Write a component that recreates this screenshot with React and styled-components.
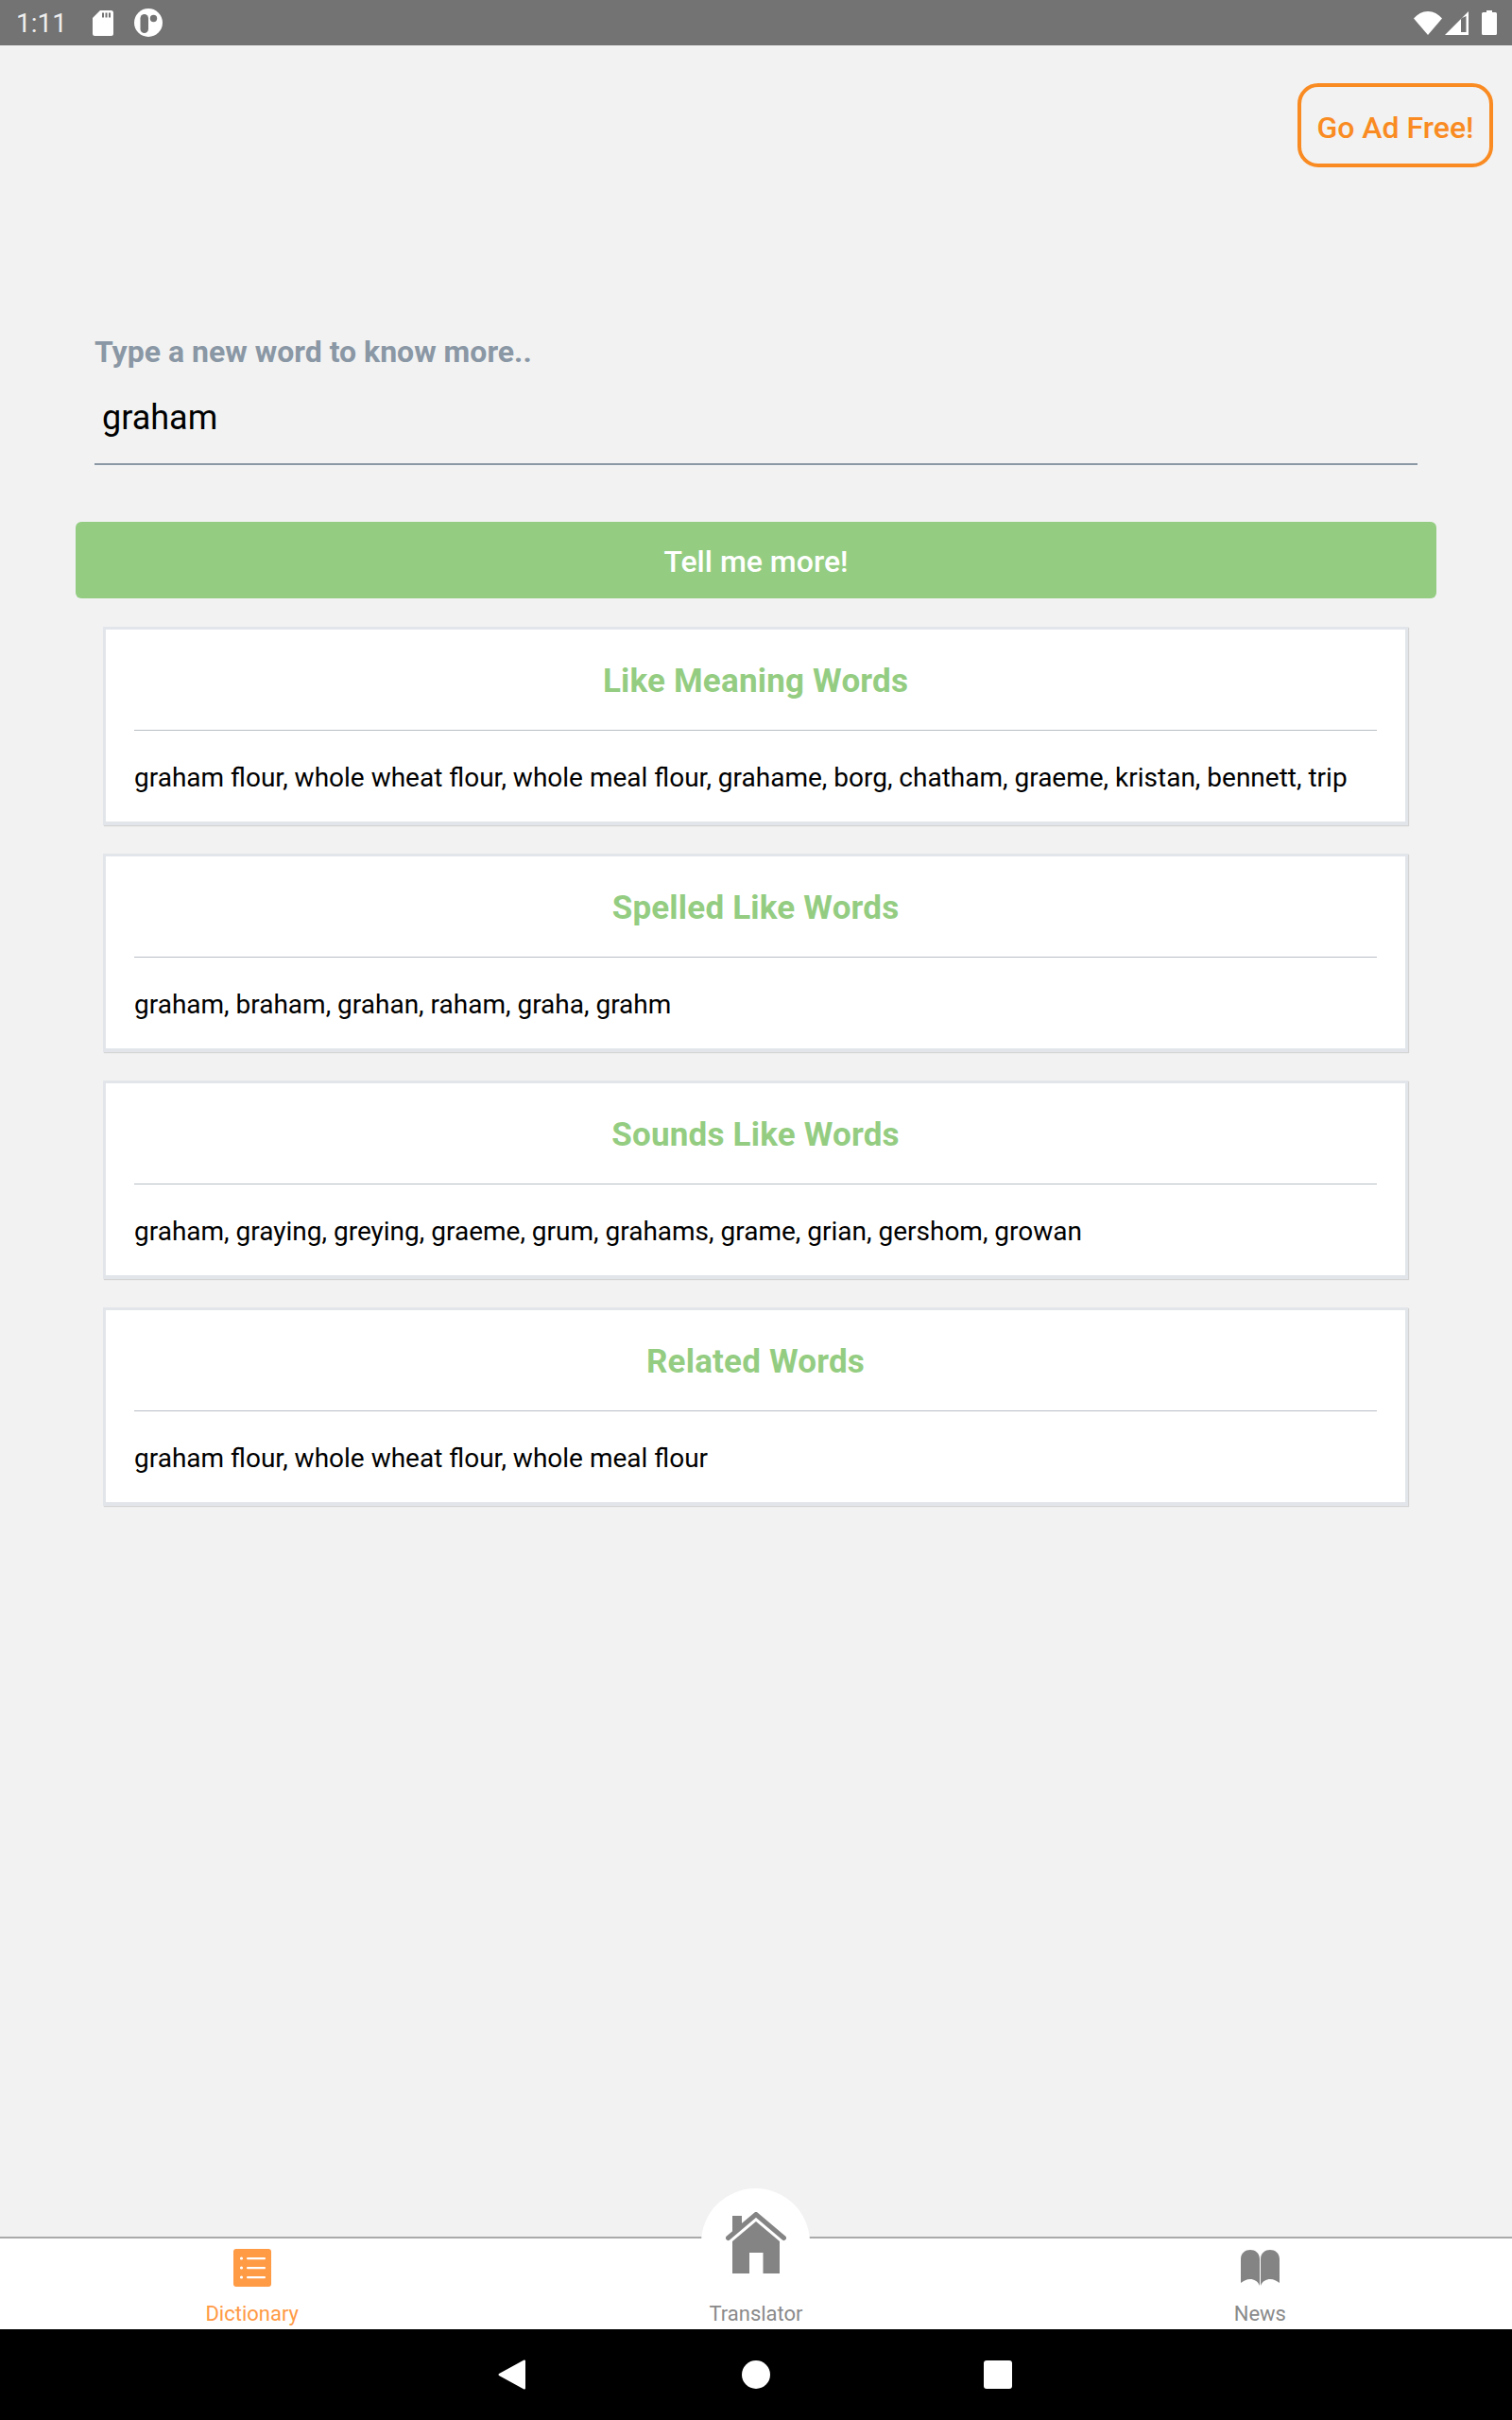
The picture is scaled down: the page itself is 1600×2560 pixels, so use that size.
import styled, { createGlobalStyle } from "styled-components";

const GlobalStyle = createGlobalStyle`
	html, body {
		margin: 0;
		padding: 0;
		background: #f2f2f2;
		font-family: Roboto, "Liberation Sans", sans-serif;
	}
	* {
		box-sizing: border-box;
	}
`;

const cards = [
	{ title: "Like Meaning Words", words: "graham flour, whole wheat flour, whole meal flour, grahame, borg, chatham, graeme, kristan, bennett, trip" },
	{ title: "Spelled Like Words", words: "graham, braham, grahan, raham, graha, grahm" },
	{ title: "Sounds Like Words", words: "graham, graying, greying, graeme, grum, grahams, grame, grian, gershom, growan" },
	{ title: "Related Words", words: "graham flour, whole wheat flour, whole meal flour" },
];

export default function App() {
	return (
		<>
			<GlobalStyle />
			<Page>
				<StatusBar>
					<Clock>1:11</Clock>
					<StatusIcon width="22" height="27" viewBox="0 0 22 27">
						<path fillRule="evenodd" fill="#fff" d="M8 0H19.5A2.5 2.5 0 0 1 22 2.5V24.5A2.5 2.5 0 0 1 19.5 27H2.5A2.5 2.5 0 0 1 0 24.5V8ZM10 2.5V7.5H12V2.5ZM13.5 2.5V7.5H15.5V2.5ZM17 2.5V7.5H19V2.5Z" />
					</StatusIcon>
					<StatusIcon $left={22} width="30" height="30" viewBox="0 0 30 30">
						<circle cx="15" cy="15" r="15" fill="#fff" />
						<rect x="6.5" y="6" width="8.5" height="20" rx="4.25" fill="#737373" />
						<circle cx="20.5" cy="10.5" r="3.7" fill="#737373" />
					</StatusIcon>
					<StatusRight>
						<svg width="30" height="25" viewBox="0 0 30 25">
							<path fill="#fff" d="M0 7.5C4 3 9 0 15 0S26 3 30 7.5L15 25Z" />
						</svg>
						<svg width="25" height="25" viewBox="0 0 25 25">
							<path fillRule="evenodd" fill="#fff" d="M0 25L25 0V25ZM17 7.5V22H22.5V5Z" />
						</svg>
						<BatterySpacer />
						<svg width="16" height="26" viewBox="0 0 16 26">
							<path fill="#fff" d="M5 0H11V2H14.5A1.5 1.5 0 0 1 16 3.5V24.5A1.5 1.5 0 0 1 14.5 26H1.5A1.5 1.5 0 0 1 0 24.5V3.5A1.5 1.5 0 0 1 1.5 2H5Z" />
						</svg>
					</StatusRight>
				</StatusBar>

				<Content>
					<TopRow>
						<AdButton>Go Ad Free!</AdButton>
					</TopRow>
					<SearchField>
						<FieldLabel>Type a new word to know more..</FieldLabel>
						<FieldValue>graham</FieldValue>
					</SearchField>
					<SubmitButton>Tell me more!</SubmitButton>
					<CardList>
						{cards.map((card) => (
							<Card key={card.title}>
								<CardTitle>{card.title}</CardTitle>
								<CardWords>{card.words}</CardWords>
							</Card>
						))}
					</CardList>
				</Content>

				<TabBar>
					<Tab $active>
						<TabIcon>
							<svg width="40" height="40" viewBox="0 0 40 40">
								<rect width="40" height="40" rx="3" fill="#ff9a45" />
								<g fill="#fff">
									<circle cx="8.5" cy="10" r="1.6" />
									<circle cx="8.5" cy="20" r="1.6" />
									<circle cx="8.5" cy="30" r="1.6" />
									<rect x="14" y="9" width="20" height="2.2" rx="1" />
									<rect x="14" y="19" width="20" height="2.2" rx="1" />
									<rect x="14" y="29" width="20" height="2.2" rx="1" />
								</g>
							</svg>
						</TabIcon>
						Dictionary
					</Tab>
					<Tab>
						<Bump />
						<HomeIcon width="64" height="66" viewBox="0 0 64 66">
							<path fill="#848484" d="M7 4H17V15L7 26Z" />
							<path fill="none" stroke="#848484" strokeWidth="5" strokeLinecap="round" d="M2.5 27.5L32 2.5L61.5 27.5" />
							<path fill="#848484" fillRule="evenodd" d="M32 10L57 31V65H39.5V43H25V65H7V31Z" />
						</HomeIcon>
						Translator
					</Tab>
					<Tab>
						<TabIcon>
							<svg width="41" height="38" viewBox="0 0 41 38">
								<path fill="#848484" d="M0 35V10C0 3 5 0 10 0C15 0 20 3 20 10V38C18 33 14 31 10 31C6 31 3 33 0 35Z" />
								<path fill="#848484" d="M41 35V10C41 3 36 0 31 0C26 0 21 3 21 10V38C23 33 27 31 31 31C35 31 38 33 41 35Z" />
							</svg>
						</TabIcon>
						News
					</Tab>
				</TabBar>

				<NavBar>
					<svg width="30" height="32" viewBox="0 0 30 32">
						<path fill="#fff" d="M28 1.5V30.5L1.5 16Z" stroke="#fff" strokeWidth="2" strokeLinejoin="round" />
					</svg>
					<NavDot />
					<NavSquare />
				</NavBar>
			</Page>
		</>
	);
}

const Page = styled.div`
	width: 1600px;
	height: 2560px;
	display: flex;
	flex-direction: column;
	background: #f2f2f2;
	overflow: hidden;
`;

const StatusBar = styled.div`
	height: 48px;
	flex: none;
	display: flex;
	align-items: center;
	padding: 0 16px 0 17px;
	background: #737373;
`;

const Clock = styled.span`
	width: 81px;
	font-size: 28px;
	color: #eeeeee;
`;

const StatusIcon = styled.svg`
	margin-left: ${(props) => props.$left || 0}px;
`;

const StatusRight = styled.div`
	margin-left: auto;
	display: flex;
	align-items: center;
	gap: 3px;
`;

const BatterySpacer = styled.div`
	width: 8px;
`;

const Content = styled.div`
	flex: 1;
	display: flex;
	flex-direction: column;
	padding: 40px 80px 0;
`;

const TopRow = styled.div`
	display: flex;
	justify-content: flex-end;
	margin-right: -60px;
`;

const AdButton = styled.button`
	width: 207px;
	height: 89px;
	padding: 5px 0 0;
	border: 4px solid #f98b22;
	border-radius: 22px;
	background: transparent;
	color: #f98b22;
	font-family: inherit;
	font-size: 32px;
	font-weight: 500;
`;

const SearchField = styled.div`
	margin: 176px 20px 0;
	border-bottom: 2px solid #8a97a5;
	height: 139px;
`;

const FieldLabel = styled.div`
	font-size: 32px;
	line-height: 38px;
	font-weight: 700;
	color: #8a97a5;
`;

const FieldValue = styled.div`
	margin-top: 29px;
	padding-left: 8px;
	font-size: 36px;
	line-height: 44px;
	color: #000;
`;

const SubmitButton = styled.button`
	margin-top: 60px;
	height: 81px;
	padding: 3px 0 0;
	border: none;
	border-radius: 6px;
	background: #94cd82;
	color: #fff;
	font-family: inherit;
	font-size: 32px;
	font-weight: 500;
`;

const CardList = styled.div`
	margin: 30px 30px 0 29px;
	display: flex;
	flex-direction: column;
	gap: 30px;
`;

const Card = styled.div`
	height: 210px;
	padding: 0 30px;
	border: 3px solid #e2e6ea;
	border-bottom-width: 4px;
	background: #fff;
	box-shadow: 1px 1px 1px rgba(0, 0, 0, 0.12);
`;

const CardTitle = styled.div`
	height: 107px;
	padding-top: 34px;
	border-bottom: 1px solid #b8bec5;
	font-size: 35px;
	letter-spacing: 0.2px;
	line-height: 42px;
	font-weight: 700;
	text-align: center;
	color: #94cd82;
`;

const CardWords = styled.div`
	padding-top: 32px;
	font-size: 28px;
	line-height: 36px;
	color: #000;
`;

const TabBar = styled.div`
	position: relative;
	height: 98px;
	flex: none;
	display: grid;
	grid-template-columns: repeat(3, 1fr);
	border-top: 2px solid #aaaaaa;
	background: #fff;
`;

const Tab = styled.div`
	position: relative;
	display: flex;
	flex-direction: column;
	align-items: center;
	justify-content: flex-end;
	padding-bottom: 3px;
	font-size: 22px;
	line-height: 26px;
	color: ${(props) => (props.$active ? "#ff9a45" : "#8a8a8a")};
`;

const TabIcon = styled.div`
	position: absolute;
	top: 11px;
	height: 40px;
	display: flex;
	align-items: center;
`;

const Bump = styled.div`
	position: absolute;
	top: -53px;
	left: 50%;
	width: 115px;
	height: 115px;
	margin-left: -57.5px;
	border-radius: 50%;
	background: #fff;
`;

const HomeIcon = styled.svg`
	position: absolute;
	top: -28px;
	left: 50%;
	margin-left: -32px;
`;

const NavBar = styled.div`
	height: 96px;
	flex: none;
	display: flex;
	align-items: center;
	padding-left: 527px;
	background: #000;
`;

const NavDot = styled.div`
	width: 30px;
	height: 30px;
	margin-left: 228px;
	border-radius: 50%;
	background: #fff;
`;

const NavSquare = styled.div`
	width: 30px;
	height: 30px;
	margin-left: 226px;
	border-radius: 3px;
	background: #fff;
`;
